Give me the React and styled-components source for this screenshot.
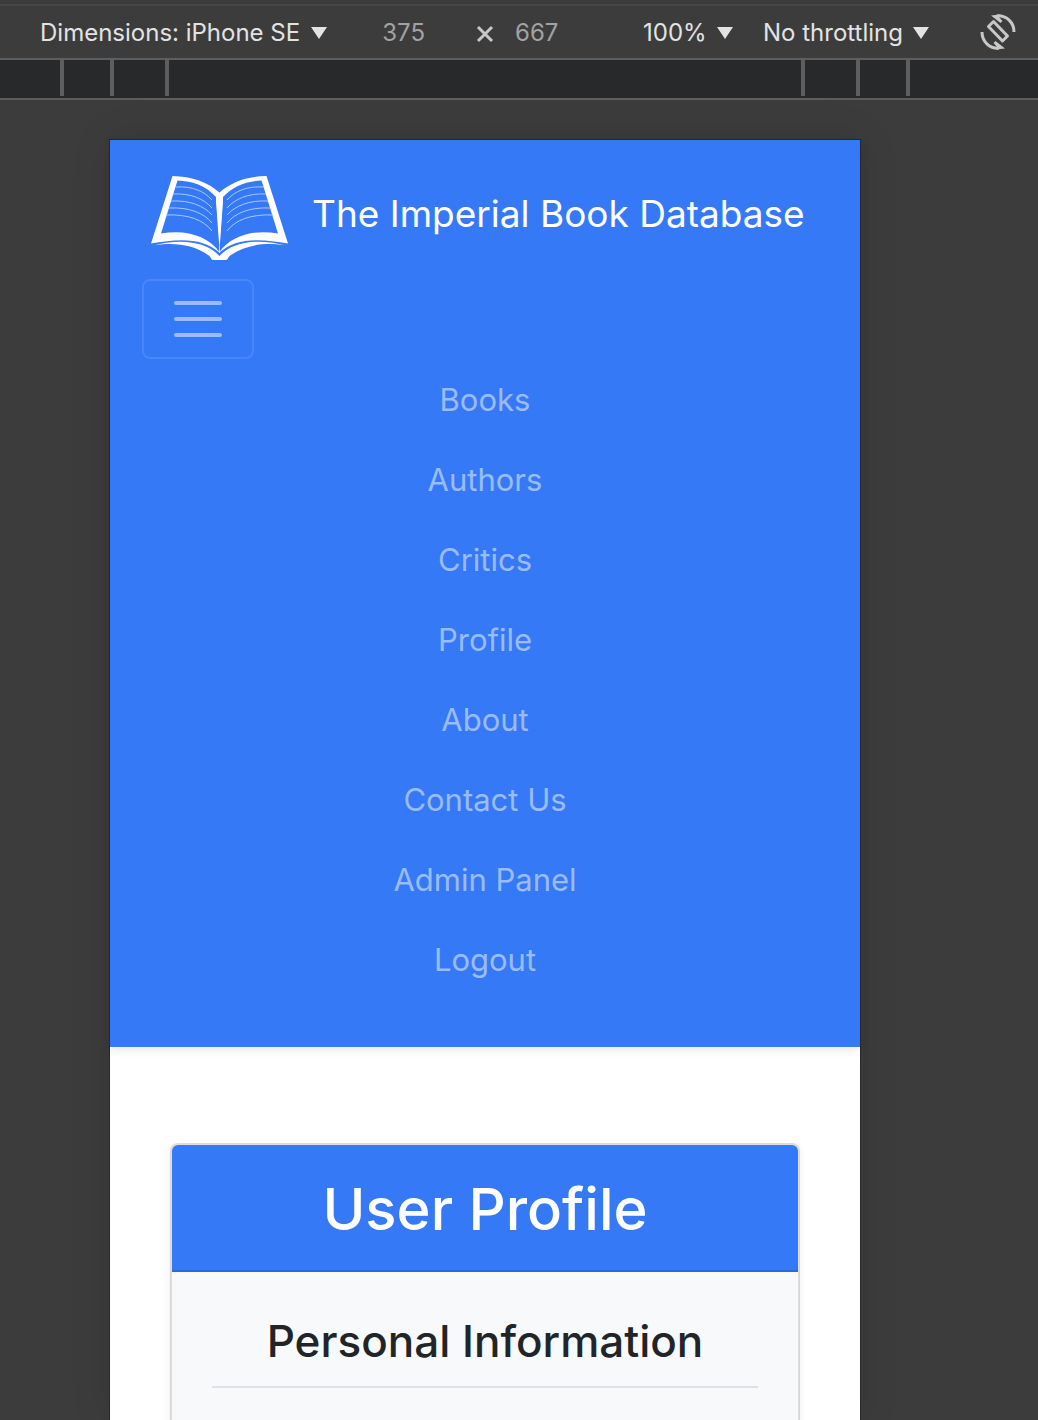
import React from "react";
import styled, { createGlobalStyle } from "styled-components";

const GlobalStyle = createGlobalStyle`
  *, *::before, *::after { box-sizing: border-box; }
  body {
    margin: 0;
    background: #3c3c3c;
    font-family: Inter, "Liberation Sans", sans-serif;
    -webkit-font-smoothing: antialiased;
  }
  button, input, select { font: inherit; color: inherit; }
`;

const Window = styled.div`
  height: 100vh;
  display: flex;
  flex-direction: column;
  overflow: hidden;
`;

const TopEdge = styled.div`
  flex: none;
  height: 6px;
  border-bottom: 2px solid #474747;
`;

const Toolbar = styled.div`
  flex: none;
  display: flex;
  align-items: center;
  height: 54px;
  padding: 2px 20px 0 40px;
  border-bottom: 2px solid #5e5e5e;
  color: #e3e3e3;
  font-size: 24px;
  line-height: 32px;
`;

const PickerBox = styled.label`
  display: flex;
  align-items: center;
  gap: 10px;
  margin-right: ${(p) => p.$after}px;
`;

const Select = styled.select`
  appearance: none;
  padding: 0;
  border: 0;
  background: transparent;
  line-height: 32px;
`;

const Arrow = styled.span`
  border: 8px solid transparent;
  border-top: 12px solid #e3e3e3;
  border-bottom: 0;
`;

const Sizes = styled.div`
  display: flex;
  align-items: center;
  color: #a2a2a2;
  margin-right: 40px;
`;

const SizeInput = styled.input`
  width: 88px;
  padding: 0;
  border: 0;
  background: transparent;
  text-align: ${(p) => p.$align};
`;

const TimesIcon = styled.svg`
  width: 20px;
  height: 20px;
  margin: 2px 20px 0 50px;
`;

const RotateButton = styled.button`
  width: 40px;
  height: 40px;
  margin: 0 0 2px auto;
  padding: 0;
  border: 0;
  background: transparent;
  svg { display: block; }
`;

const Ruler = styled.div`
  flex: none;
  display: flex;
  justify-content: center;
  height: 40px;
  padding: 0 68px 2px 0;
  background: #28292b;
  border-bottom: 2px solid #5e5e5e;
`;

const RulerSegment = styled.div`
  flex: none;
  width: ${(p) => p.$width}px;
  border-left: 4px solid #5e5e5e;
`;

const Canvas = styled.div`
  flex: 1;
  min-height: 0;
  display: flex;
  justify-content: center;
  padding: 40px 68px 0 0;
`;

const Device = styled.div`
  width: 750px;
  max-width: 100%;
  background: #fff;
  box-shadow: 0 0 0 1px #28292b, 0 0 40px rgba(0, 0, 0, 0.1);
`;

const Nav = styled.nav`
  padding: 16px 32px 47px;
  background: #3579f7;
  box-shadow: 0 4px 8px rgba(0, 0, 0, 0.075);
`;

const Brand = styled.a`
  display: flex;
  align-items: center;
  gap: 22px;
  height: 123px;
  padding: 0 0 8px 8px;
  color: #fff;
  font-size: 37px;
  line-height: 60px;
  white-space: nowrap;
  text-decoration: none;
`;

const Logo = styled.svg`
  flex: none;
  width: 140px;
  height: 88px;
  margin-top: 10px;
`;

const Toggler = styled.button`
  display: flex;
  flex-direction: column;
  align-items: center;
  justify-content: center;
  gap: 12px;
  width: 112px;
  height: 80px;
  padding: 0;
  border: 2px solid rgba(255, 255, 255, 0.1);
  border-radius: 8px;
  background: transparent;
`;

const TogglerLine = styled.span`
  width: 48px;
  height: 4px;
  border-radius: 2px;
  background: rgba(255, 255, 255, 0.5);
`;

const Menu = styled.ul`
  margin: 1px 0 0;
  padding: 0;
  list-style: none;
`;

const MenuLink = styled.a`
  display: block;
  padding: 16px;
  color: rgba(255, 255, 255, 0.5);
  font-size: 31px;
  line-height: 48px;
  text-align: center;
  text-decoration: none;
`;

const Card = styled.section`
  margin: 96px 60px 0;
  height: 600px;
  border: 2px solid rgba(0, 0, 0, 0.125);
  border-radius: 8px;
  background: #f8f9fb;
  background-clip: padding-box;
  box-shadow: 0 4px 8px rgba(0, 0, 0, 0.075);
  text-align: center;
`;

const CardHeader = styled.header`
  height: 127px;
  padding: 24px 40px;
  background: #3579f7;
  border-bottom: 2px solid rgba(0, 0, 0, 0.125);
  border-radius: 6px 6px 0 0;
`;

const CardTitle = styled.h1`
  margin: 0;
  color: #fff;
  font-size: 58px;
  line-height: 80px;
  font-weight: 500;
`;

const CardBody = styled.div`
  padding: 40px;
`;

const SectionTitle = styled.h2`
  margin: 0;
  padding-bottom: 16px;
  border-bottom: 2px solid #dee2e6;
  color: #212529;
  font-size: 44px;
  line-height: 58px;
  font-weight: 500;
  white-space: nowrap;
`;

const LINKS = [
  "Books",
  "Authors",
  "Critics",
  "Profile",
  "About",
  "Contact Us",
  "Admin Panel",
  "Logout",
];

const RULER = [50, 55, 636, 55, 50, 4];

function Picker({ label, value, after }) {
  return (
    <PickerBox $after={after}>
      <Select aria-label={label} defaultValue={value}>
        <option>{value}</option>
      </Select>
      <Arrow />
    </PickerBox>
  );
}

function BookHalf() {
  return (
    <>
      <path
        fill="#fff"
        fillRule="evenodd"
        d="M70 18C58 7 42 1.500 22.500 1L1 68.500C30 63 54 63 70 78ZM66 22C56 11 43 6 27.500 5.500L11 58.500C36 54 58 61 69.500 77V68Z"
      />
      <path
        fill="#fff"
        d="M1 71C30 63 56 66 69.500 81H71V85H63C61 85 61.500 82 58 80C42 69 22 67 1 71Z"
      />
      <g fill="none" stroke="#a9c8fd" strokeWidth="1">
        <path d="M26 12C42 11 54 16 62 25" />
        <path d="M23 19C41 18 54 24 62 33" />
        <path d="M21 26C40 25 54 31 62 40" />
        <path d="M19 33C39 32 54 38 62 48" />
        <path d="M16 40C38 39 54 45 62 56" />
      </g>
    </>
  );
}

function BookLogo() {
  return (
    <Logo viewBox="0 0 140 88" aria-hidden="true">
      <BookHalf />
      <g transform="matrix(-1 0 0 1 139 0)">
        <BookHalf />
      </g>
      <path fill="#fff" d="M66 20H73V26L70 68H69L66 26Z" />
    </Logo>
  );
}

function RotateIcon() {
  return (
    <svg width="40" height="40" viewBox="0 0 40 40" fill="none" stroke="#c8c8c8" aria-hidden="true">
      <path strokeWidth="3" d="M15.500 9.500L10.500 14.500L24.500 29L29.500 24Z" strokeLinejoin="round" />
      <path strokeWidth="3" d="M19 3.800C28 3.200 36 10 36 20" />
      <path strokeWidth="3" d="M21 36.200C12 36.800 4 30 4 20" />
      <path fill="#c8c8c8" stroke="none" d="M13 3.500L22 2.400L21 5L24.500 9L22.500 11ZM27 36.500L18 37.600L19 35L15.500 31L17.500 29Z" />
    </svg>
  );
}

export default function App() {
  return (
    <Window>
      <GlobalStyle />
      <TopEdge />
      <Toolbar>
        <Picker label="Device" value="Dimensions: iPhone SE" after={10} />
        <Sizes>
          <SizeInput aria-label="Width" defaultValue="375" $align="right" />
          <TimesIcon viewBox="0 0 20 20" stroke="#c8c8c8" strokeWidth="3" aria-hidden="true">
            <path d="M3 3L17 17M17 3L3 17" />
          </TimesIcon>
          <SizeInput aria-label="Height" defaultValue="667" $align="left" />
        </Sizes>
        <Picker label="Zoom" value="100%" after={30} />
        <Picker label="Throttling" value="No throttling" after={0} />
        <RotateButton aria-label="Rotate">
          <RotateIcon />
        </RotateButton>
      </Toolbar>
      <Ruler>
        {RULER.map((width, i) => (
          <RulerSegment key={i} $width={width} />
        ))}
      </Ruler>
      <Canvas>
        <Device>
          <Nav>
            <Brand href="#">
              <BookLogo />
              The Imperial Book Database
            </Brand>
            <Toggler aria-label="Toggle navigation">
              <TogglerLine />
              <TogglerLine />
              <TogglerLine />
            </Toggler>
            <Menu>
              {LINKS.map((name) => (
                <li key={name}>
                  <MenuLink href="#">{name}</MenuLink>
                </li>
              ))}
            </Menu>
          </Nav>
          <Card>
            <CardHeader>
              <CardTitle>User Profile</CardTitle>
            </CardHeader>
            <CardBody>
              <SectionTitle>Personal Information</SectionTitle>
            </CardBody>
          </Card>
        </Device>
      </Canvas>
    </Window>
  );
}
